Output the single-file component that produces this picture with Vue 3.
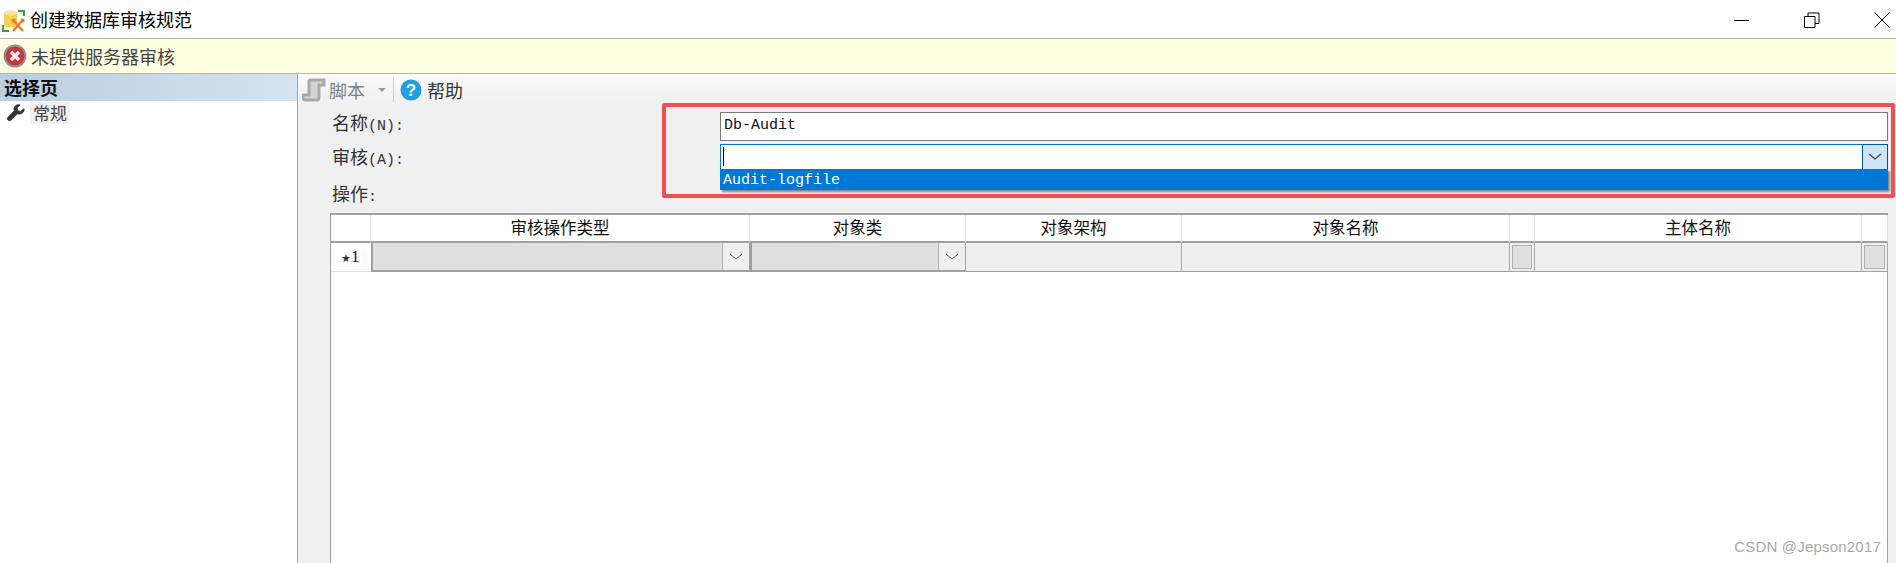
<script setup>
const gridColumns = ['审核操作类型', '对象类', '对象架构', '对象名称', '', '主体名称', '']
</script>

<template>
  <div class="window">
    <header class="titlebar">
      <svg class="app-icon" width="24" height="24" viewBox="0 0 24 24">
        <path d="M1 17v6h6M16 3h6v5" fill="none" stroke="#4c9a3c" stroke-width="2" />
        <path d="M2 5c0-3 13-3 13 0v12c0 3-13 3-13 0z" fill="#f6cf55" />
        <ellipse cx="8.500" cy="5" rx="6.500" ry="2.500" fill="#fbe79c" />
        <path d="M11 12l10 11M21 12L11 23" stroke="#e8792b" stroke-width="2.400" />
        <circle cx="11.500" cy="12.500" r="2" fill="#e8792b" />
        <circle cx="20.500" cy="12.500" r="2" fill="#e8792b" />
      </svg>
      <span class="title">创建数据库审核规范</span>
      <div class="win-buttons">
        <svg width="16" height="16" viewBox="0 0 16 16"><path d="M0 8.500h15" stroke="#000" fill="none" /></svg>
        <svg width="16" height="16" viewBox="0 0 16 16"><path d="M.5 4.500h10.500v11H.5zM4 4.500V1h11v10.500h-4" stroke="#000" fill="none" /></svg>
        <svg width="16" height="16" viewBox="0 0 16 16"><path d="M.5.500l15 15M15.500.500l-15 15" stroke="#000" fill="none" /></svg>
      </div>
    </header>

    <div class="notice">
      <svg width="24" height="24" viewBox="0 0 24 24">
        <circle cx="12" cy="12" r="11.500" fill="#8f9496" />
        <circle cx="12" cy="12" r="9.500" fill="#c9373f" />
        <path d="M8 8l8 8M16 8l-8 8" stroke="#f4eeee" stroke-width="3.200" />
      </svg>
      <span>未提供服务器审核</span>
    </div>

    <div class="body">
      <aside class="sidebar">
        <div class="side-head">选择页</div>
        <div class="side-item">
          <svg width="18" height="18" viewBox="0 0 18 18">
            <path d="M17 4.500l-3.200 3-3-.8-.8-3L13.200 1C10.500.1 7.300 1.500 7 4.500c-.1 1 .1 1.700.3 2.300L1.200 13c-1 1-1 2.300-.2 3.200.9.800 2.200.8 3.200-.2l6.200-6.100c3.500 1 7.600-1.600 6.600-5.400z" fill="#333" stroke="#333" stroke-width=".8" />
          </svg>
          <span class="side-label">常规</span>
        </div>
      </aside>

      <main class="content">
        <div class="toolbar">
          <svg width="24" height="24" viewBox="0 0 24 24">
            <path d="M7 4c0-1.500 1-2 2-2h13v5h-5v13c0 1-1 2-2 2H3c-1 0-2-1-2-2v-3h6z" fill="#d4d4d4" stroke="#a8a8a8" stroke-width="3" />
          </svg>
          <span class="tool-muted">脚本</span>
          <span class="caret"></span>
          <span class="divider"></span>
          <svg width="22" height="22" viewBox="0 0 22 22">
            <circle cx="11" cy="11" r="10.500" fill="#1e9fe0" />
            <text x="11" y="17" text-anchor="middle" class="q-mark">?</text>
          </svg>
          <span class="tool-help">帮助</span>
        </div>

        <div class="form">
          <label class="lbl first"><span class="cjk">名称</span>(N):</label>
          <div class="input">Db-Audit</div>
          <label class="lbl second"><span class="cjk">审核</span>(A):</label>
          <div class="combo">
            <span class="cursor"></span>
            <span class="combo-btn">
              <svg width="14" height="8" viewBox="0 0 14 8"><path d="M1 1l6 5 6-5" fill="none" stroke="#444" stroke-width="1.300" /></svg>
            </span>
            <div class="dropdown">Audit-logfile</div>
          </div>
        </div>

        <div class="op-label"><span class="cjk">操作</span>:</div>

        <div class="grid">
          <div class="cell corner"></div>
          <div v-for="(c, i) in gridColumns" :key="i" class="cell head">{{ c }}</div>

          <div class="cell rowhead"><span class="star">★</span>1</div>
          <div class="cell pick">
            <span class="pick-btn"><svg width="14" height="8" viewBox="0 0 14 8"><path d="M1 1l6 5 6-5" fill="none" stroke="#555" /></svg></span>
          </div>
          <div class="cell pick">
            <span class="pick-btn"><svg width="14" height="8" viewBox="0 0 14 8"><path d="M1 1l6 5 6-5" fill="none" stroke="#555" /></svg></span>
          </div>
          <div class="cell plain"></div>
          <div class="cell plain"></div>
          <div class="cell plain btn-cell"><span class="square"></span></div>
          <div class="cell plain"></div>
          <div class="cell plain btn-cell"><span class="square"></span></div>
        </div>

        <div class="highlight"></div>
      </main>
    </div>

    <div class="watermark">CSDN @Jepson2017</div>
  </div>
</template>

<style scoped>
.window {
  position: relative;
  width: 1896px;
  height: 563px;
  overflow: hidden;
  display: flex;
  flex-direction: column;
  background: #fff;
  font-family: "Noto Sans CJK SC", "Liberation Sans", sans-serif;
  color: #000;
}
.titlebar {
  height: 38px;
  flex: none;
  display: flex;
  align-items: center;
  padding-left: 2px;
  border-bottom: 1px solid #b4b4b4;
}
.app-icon { margin: 2px 4px 0 0; }
.title { font-size: 18px; }
.win-buttons {
  margin-left: auto;
  display: flex;
  gap: 54px;
  padding-right: 6px;
  margin-top: 2px;
}
.notice {
  height: 34px;
  flex: none;
  background: #ffffe1;
  border-bottom: 1px solid #b4b4b4;
  display: flex;
  align-items: center;
  gap: 4px;
  padding-left: 3px;
  font-size: 18px;
  color: #444;
}
.body { flex: 1; display: flex; min-height: 0; }
.sidebar {
  width: 297px;
  flex: none;
  border-right: 1px solid #a0a0a0;
  box-sizing: content-box;
}
.side-head {
  height: 27px;
  line-height: 26px;
  padding-left: 4px;
  font-size: 18px;
  font-weight: 700;
  color: #111;
  background: linear-gradient(90deg, #bccde0, #d6e3f0);
}
.side-item {
  display: flex;
  align-items: center;
  height: 22px;
  margin-top: 1px;
  padding-left: 7px;
}
.side-label {
  margin-left: 5px;
  width: 40px;
  height: 22px;
  line-height: 21px;
  background: #f0f0f0;
  font-size: 17px;
  color: #444;
  text-align: center;
}
.content {
  position: relative;
  flex: 1;
  min-width: 0;
  background: #f0f0f0;
  font-family: "Liberation Mono", "Noto Sans CJK SC", monospace;
  font-size: 15px;
  color: #333;
}
.toolbar {
  height: 31px;
  display: flex;
  align-items: center;
  padding-left: 4px;
  background: linear-gradient(180deg, #fafafa, #f0f0f0);
  font-family: "Noto Sans CJK SC", sans-serif;
  font-size: 18px;
}
.tool-muted { margin-left: 3px; color: #808080; }
.caret {
  margin-left: 13px;
  border-left: 4px solid transparent;
  border-right: 4px solid transparent;
  border-top: 4px solid #999;
}
.divider {
  width: 1px;
  height: 24px;
  margin: 0 6px 0 7px;
  background: #ccc;
}
.q-mark {
  font-family: "Liberation Sans", sans-serif;
  font-size: 17px;
  font-weight: 700;
  fill: #fff;
}
.tool-help { margin-left: 5px; }
.cjk { font-family: "Noto Sans CJK SC", sans-serif; font-size: 18px; }
.form {
  display: grid;
  grid-template-columns: 388px 1fr;
  grid-template-rows: 29px 26px;
  row-gap: 3px;
  padding: 7px 8px 0 34px;
  align-items: center;
}
.lbl { height: 24px; line-height: 24px; }
.lbl.first { margin-top: -9px; }
.lbl.second { margin-top: -2px; }
.input {
  height: 29px;
  box-sizing: border-box;
  border: 1px solid #7a7a7a;
  background: #fff;
  padding-left: 3px;
  line-height: 26px;
  color: #111;
}
.combo {
  position: relative;
  height: 26px;
  box-sizing: border-box;
  border: 1px solid #0078d7;
  background: #fff;
}
.cursor {
  position: absolute;
  left: 2px;
  top: 2px;
  width: 1px;
  height: 19px;
  background: #000;
}
.combo-btn {
  position: absolute;
  right: -1px;
  top: -1px;
  width: 26px;
  height: 26px;
  box-sizing: border-box;
  border: 1px solid #005499;
  background: #cce4f7;
  display: flex;
  align-items: center;
  justify-content: center;
}
.dropdown {
  position: absolute;
  left: -1px;
  right: -1px;
  top: 24px;
  height: 21px;
  line-height: 24px;
  padding-left: 3px;
  background: #0078d7;
  color: #fff;
  box-shadow: 2px 2px 2px rgba(0, 0, 0, 0.45);
  z-index: 2;
}
.op-label {
  margin: 11px 0 0 34px;
  height: 24px;
  line-height: 24px;
}
.grid {
  margin: 8px 8px 0 32px;
  height: 400px;
  box-sizing: border-box;
  border: 1px solid #a0a0a0;
  border-top-width: 2px;
  background: #fff;
  display: grid;
  grid-template-columns: 40px 379px 216px 216px 328px 25px 327px 26px;
  grid-template-rows: 28px 29px;
  align-content: start;
  font-family: "Noto Sans CJK SC", sans-serif;
  font-size: 16.500px;
}
.cell { box-sizing: border-box; }
.corner, .head {
  border-right: 1px solid #e2e2e2;
  border-bottom: 2px solid #a0a0a0;
}
.head {
  text-align: center;
  line-height: 24px;
  color: #111;
}
.rowhead {
  display: flex;
  align-items: center;
  padding-left: 10px;
  border-bottom: 1px solid #e2e2e2;
  font-family: "Liberation Serif", serif;
  font-size: 17px;
  color: #222;
}
.star { font-size: 11px; color: #333; margin-top: 3px; }
.pick {
  position: relative;
  background: #e0e0e0;
  border: 2px solid #a0a0a0;
  border-top-width: 0;
  border-right-width: 1px;
}
.pick-btn {
  position: absolute;
  right: 0;
  top: 0;
  bottom: 0;
  width: 26px;
  background: #efefef;
  border-left: 1px solid #b4b4b4;
  display: flex;
  align-items: center;
  justify-content: center;
}
.plain {
  background: #efefef;
  border-right: 1px solid #a8a8a8;
  border-bottom: 1px solid #a0a0a0;
}
.btn-cell { padding: 2px; display: flex; }
.square {
  flex: 1;
  background: #e0e0e0;
  border: 1px solid #b0b0b0;
}
.highlight {
  position: absolute;
  left: 364px;
  top: 29px;
  width: 1233px;
  height: 95px;
  box-sizing: border-box;
  border: 4px solid #ee4f53;
  border-radius: 2px;
  pointer-events: none;
  z-index: 3;
}
.watermark {
  position: absolute;
  right: 15px;
  bottom: 8px;
  font-family: "Liberation Sans", sans-serif;
  font-size: 15px;
  color: #a8a8a8;
  letter-spacing: 0.200px;
  z-index: 4;
}
</style>
